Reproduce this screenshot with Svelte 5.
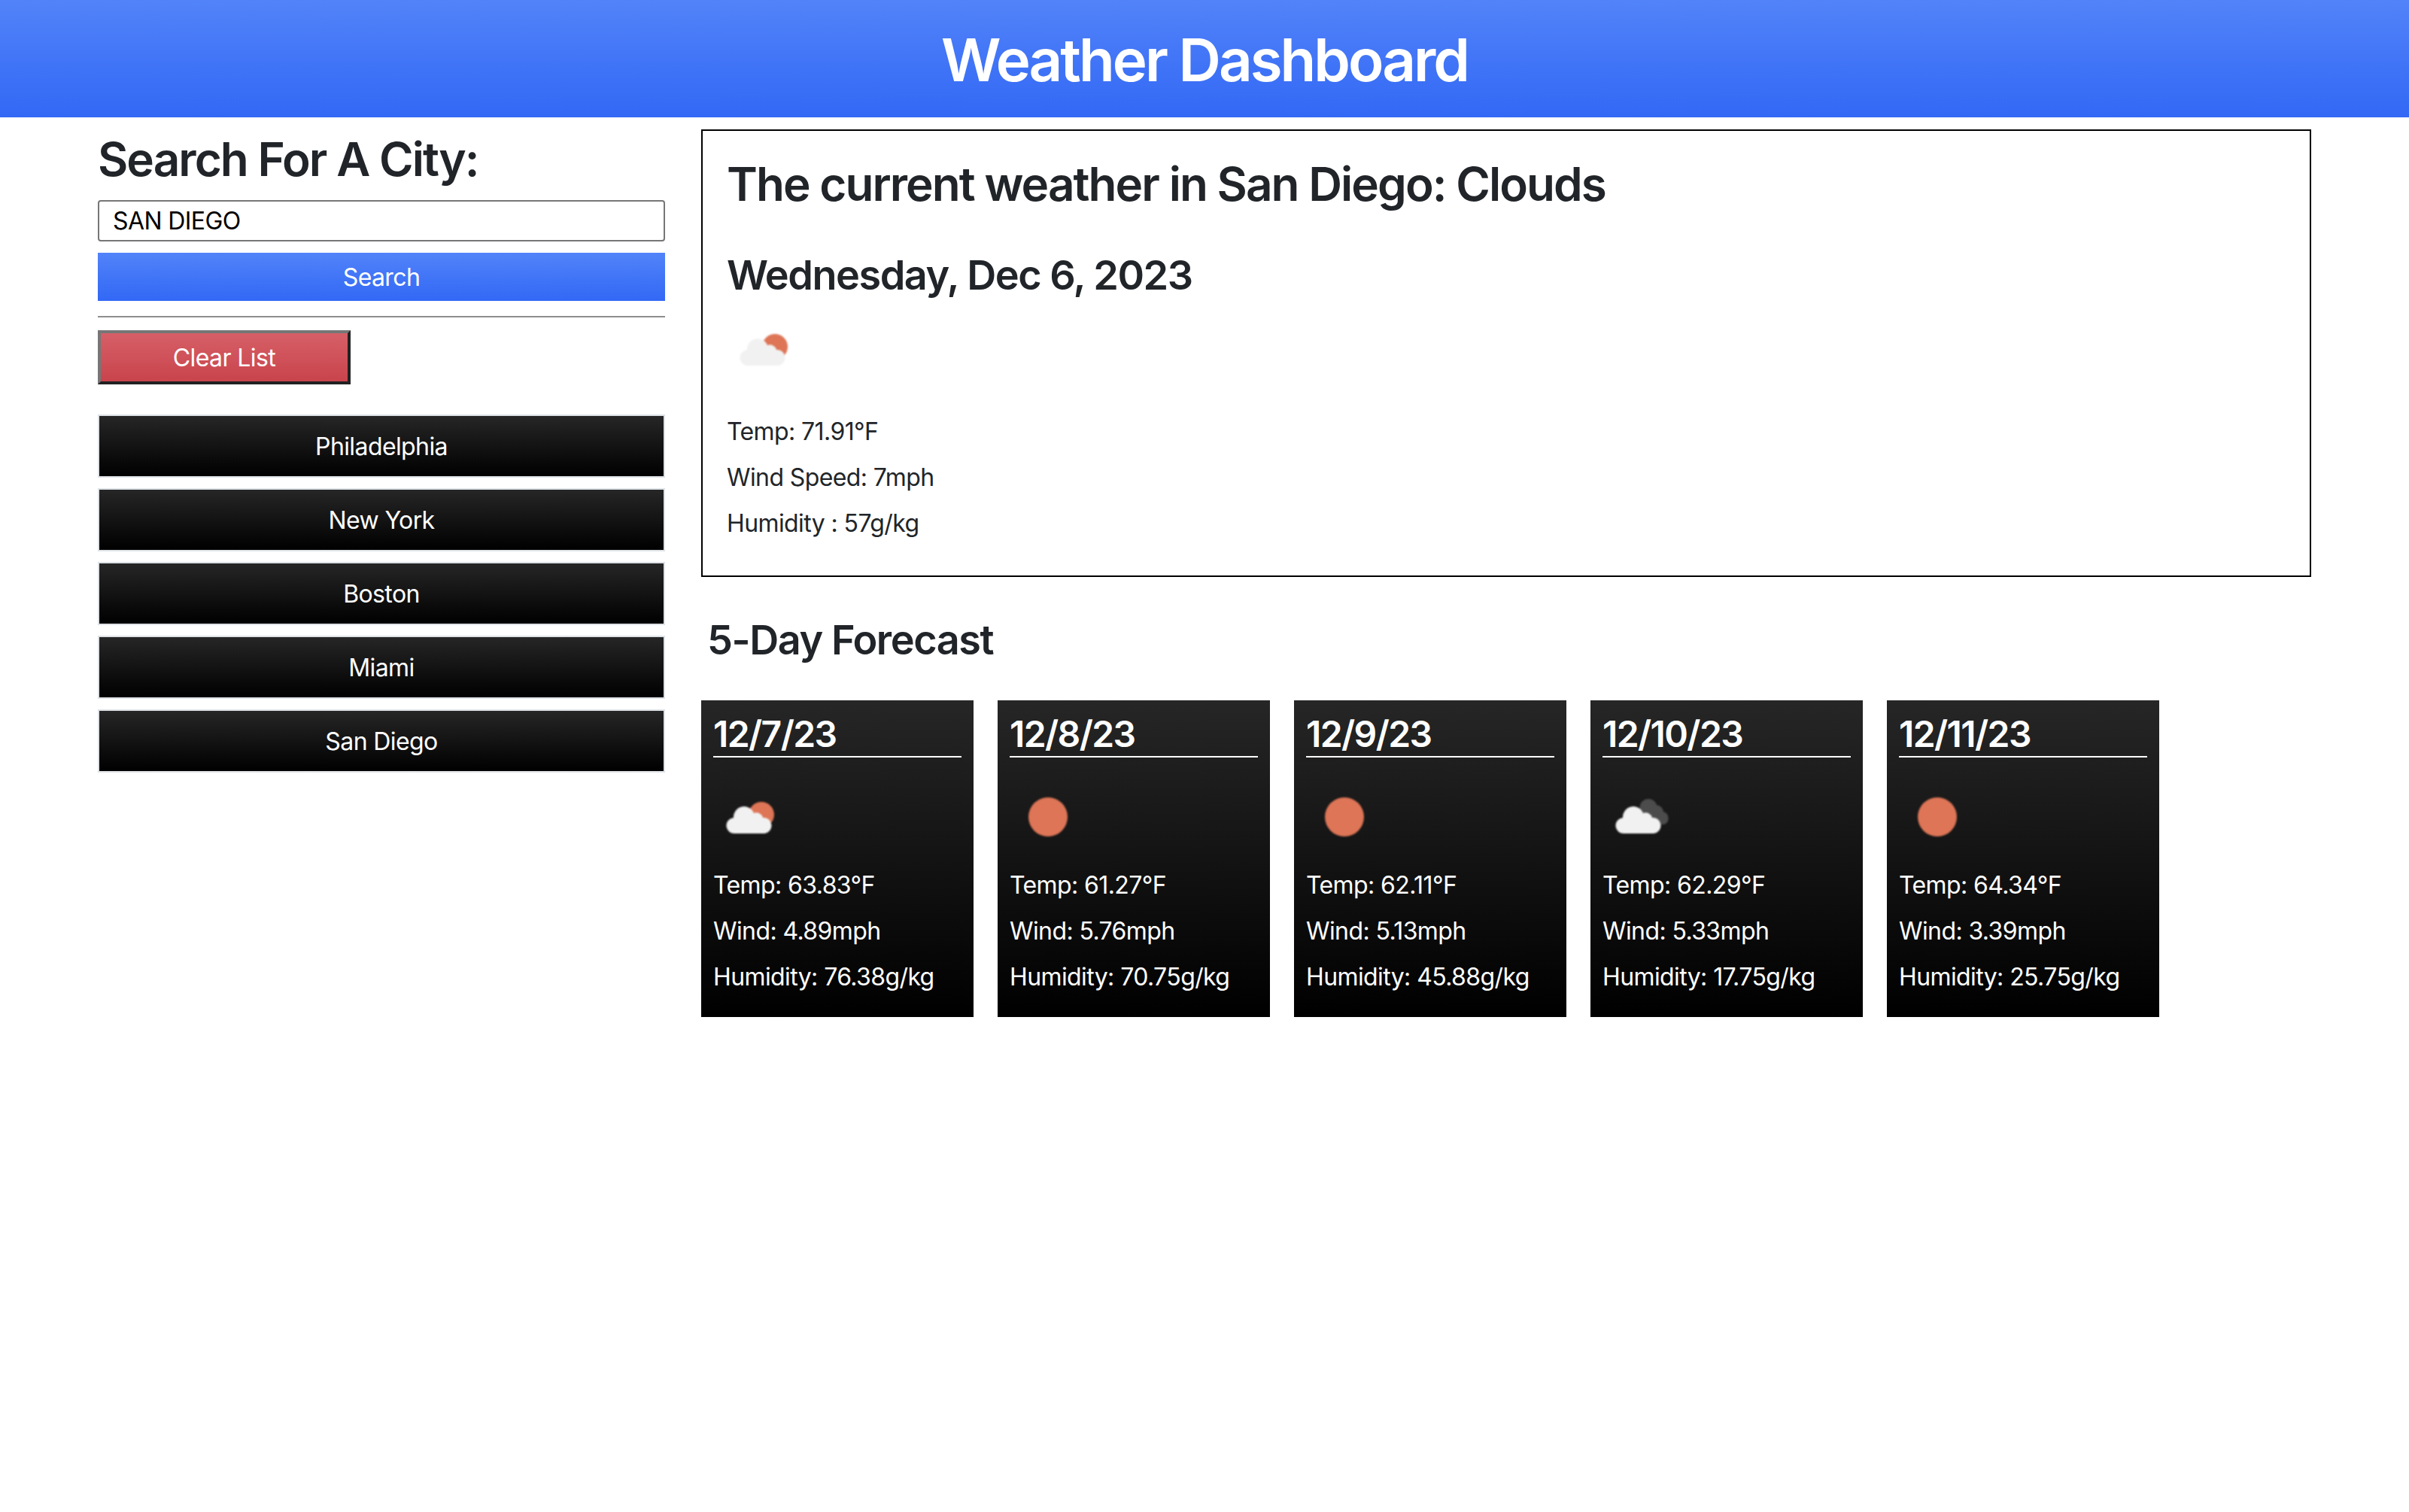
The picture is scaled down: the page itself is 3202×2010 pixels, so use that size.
<script>
  const cities = ["Philadelphia", "New York", "Boston", "Miami", "San Diego"];
  const forecast = [
    { date: "12/7/23", icon: "few", temp: "63.83", wind: "4.89", humidity: "76.38" },
    { date: "12/8/23", icon: "clear", temp: "61.27", wind: "5.76", humidity: "70.75" },
    { date: "12/9/23", icon: "clear", temp: "62.11", wind: "5.13", humidity: "45.88" },
    { date: "12/10/23", icon: "broken", temp: "62.29", wind: "5.33", humidity: "17.75" },
    { date: "12/11/23", icon: "clear", temp: "64.34", wind: "3.39", humidity: "25.75" }
  ];
</script>

{#snippet weatherIcon(kind)}
  <svg class="icon" viewBox="0 0 100 100" width="100" height="100" aria-hidden="true">
    <g class="soft">
      {#if kind === "clear"}
        <circle cx="51" cy="49" r="26" fill="#dd7556" />
      {:else}
        {#if kind === "few"}
          <circle cx="64" cy="46" r="17" fill="#dd7556" />
        {:else}
          <path d="M50 40a11 11 0 0 1 22-7a10 10 0 0 1 9 9a9 9 0 0 1 1 17H60z" fill="#4c4c4c" />
        {/if}
        <path
          d="M29 71a10.500 10.500 0 0 1-2-21a14 14 0 0 1 27-6a9 9 0 0 1 12 6a10.500 10.500 0 0 1 2 21z"
          fill="#f1f1f1"
        />
      {/if}
    </g>
  </svg>
{/snippet}

<header class="banner">
  <h1>Weather Dashboard</h1>
</header>

<div class="page">
  <aside class="sidebar">
    <h2>Search For A City:</h2>
    <input class="city-input" type="text" value="SAN DIEGO" />
    <button class="search">Search</button>
    <div class="rule"></div>
    <button class="clear">Clear List</button>
    <div class="cities">
      {#each cities as city}
        <button class="city">{city}</button>
      {/each}
    </div>
  </aside>

  <main class="content">
    <section class="current">
      <h2>The current weather in San Diego: Clouds</h2>
      <h3>Wednesday, Dec 6, 2023</h3>
      {@render weatherIcon("few")}
      <p>Temp: 71.91°F</p>
      <p>Wind Speed: 7mph</p>
      <p>Humidity : 57g/kg</p>
    </section>

    <h3 class="forecast-title">5-Day Forecast</h3>

    <div class="cards">
      {#each forecast as day}
        <article class="card">
          <h4>{day.date}</h4>
          {@render weatherIcon(day.icon)}
          <p>Temp: {day.temp}°F</p>
          <p>Wind: {day.wind}mph</p>
          <p>Humidity: {day.humidity}g/kg</p>
        </article>
      {/each}
    </div>
  </main>
</div>

<style>
  :global(body) {
    margin: 0;
    background: #fff;
    color: #212529;
    font-family: Inter, "Liberation Sans", sans-serif;
    font-size: 32px;
    letter-spacing: -0.6px;
  }

  h1,
  h2,
  h3,
  h4,
  p {
    margin: 0;
  }

  h1,
  h2,
  h3,
  h4 {
    font-weight: 600;
    line-height: 1.2;
  }

  .banner {
    height: 156px;
    box-sizing: border-box;
    padding-top: 4px;
    display: flex;
    align-items: center;
    justify-content: center;
    background: linear-gradient(#5283f9, #3268f5);
    color: #fff;
  }

  .banner h1 {
    font-size: 78px;
    letter-spacing: -3px;
  }

  .page {
    display: flex;
    padding: 16px 130px 0;
    gap: 48px;
  }

  .sidebar {
    width: 754px;
    flex: none;
    display: flex;
    flex-direction: column;
    align-items: stretch;
    padding-top: 3px;
  }

  .sidebar h2 {
    font-size: 62px;
    letter-spacing: -1.95px;
    margin-bottom: 17px;
  }

  button {
    font-family: inherit;
    font-size: 32px;
    letter-spacing: inherit;
    color: #fff;
    cursor: pointer;
  }

  .city-input {
    height: 55px;
    box-sizing: border-box;
    padding: 0 18px;
    border: 2px solid #767676;
    border-radius: 4px;
    font-family: inherit;
    font-size: 32px;
    letter-spacing: inherit;
    color: #000;
    margin-bottom: 15px;
  }

  .search {
    height: 64px;
    border: 0;
    padding: 0;
    background: linear-gradient(#5283f9, #3268f5);
  }

  .rule {
    height: 2px;
    background: #8e8e8e;
    margin: 20px 0 17px;
  }

  .clear {
    width: 336px;
    height: 72px;
    padding: 0;
    border: 4px solid;
    border-color: #767676 #222 #222 #767676;
    background: linear-gradient(#d65f67, #c9444c);
  }

  .cities {
    display: flex;
    flex-direction: column;
    gap: 14px;
    margin-top: 40px;
  }

  .city {
    height: 84px;
    padding: 0;
    border: 2px solid #dee2e6;
    background: linear-gradient(#262626, #000);
  }

  .content {
    flex: 1;
    min-width: 0;
  }

  .current {
    box-sizing: border-box;
    border: 2px solid #000;
    padding: 32px;
  }

  .current h2 {
    font-size: 62px;
    letter-spacing: -1.95px;
    margin-top: 2px;
    margin-bottom: 52px;
  }

  .current h3 {
    font-size: 54px;
    letter-spacing: -1.5px;
    margin-bottom: 16px;
  }

  .current p,
  .card p {
    line-height: 48px;
    margin-bottom: 13px;
  }

  .icon {
    display: block;
  }

  .current .icon {
    margin-bottom: 35px;
  }

  .card .icon {
    margin-bottom: 16px;
  }

  .soft {
    filter: blur(1px);
  }

  .forecast-title {
    font-size: 54px;
    letter-spacing: -1.45px;
    padding: 52px 0 47px 8px;
  }

  .cards {
    display: flex;
    gap: 32px;
  }

  .card {
    width: 362px;
    box-sizing: border-box;
    padding: 16px;
    color: #fff;
    background: linear-gradient(#262626, #000);
  }

  .card h4 {
    font-size: 48px;
    letter-spacing: -1.6px;
    border-bottom: 2px solid #fff;
    margin-bottom: 30px;
  }
</style>
